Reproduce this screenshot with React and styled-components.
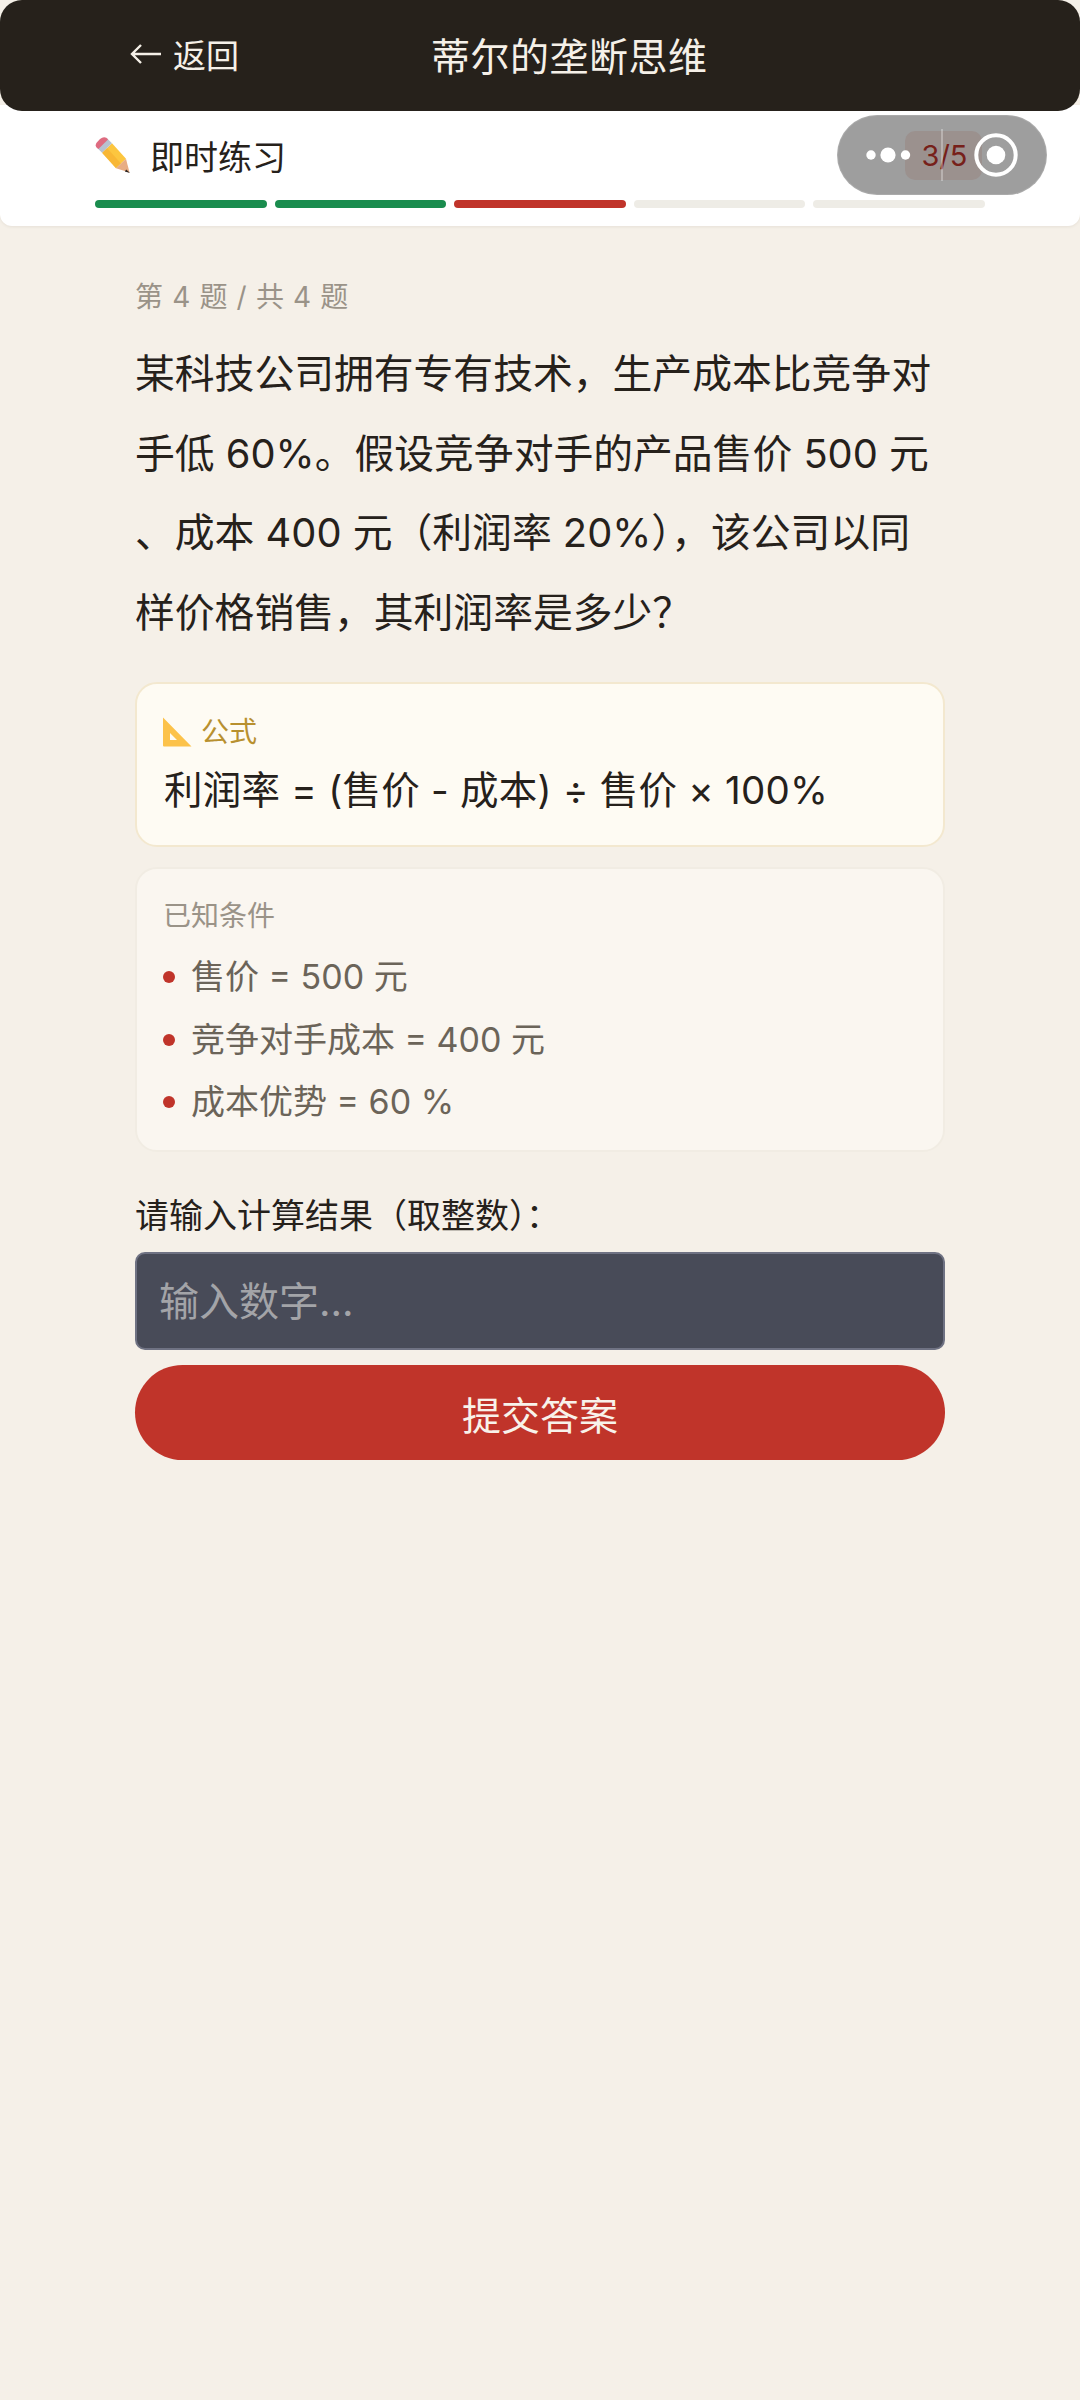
import React from "react";
import styled, { createGlobalStyle } from "styled-components";

const GlobalStyle = createGlobalStyle`
  html, body { margin: 0; padding: 0; background: #f5f0e8; }
  * { box-sizing: border-box; }
  body {
    font-family: Inter, "Noto Sans CJK SC", sans-serif;
  }
`;

const Page = styled.div`
  position: relative;
  width: 1080px;
  min-height: 2400px;
  background: #f5f0e8;
`;

const Header = styled.header`
  position: relative;
  z-index: 2;
  height: 111px;
  background: #26211b;
  border-radius: 22px;
  display: flex;
  align-items: center;
  padding: 0 0 3px 130px;
  color: #f5f0e8;
`;

const Back = styled.div`
  width: 301px;
  font-size: 33px;
  display: flex;
  align-items: center;
  gap: 11px;
`;

const Title = styled.h1`
  margin: 0;
  font-size: 39px;
  font-weight: 400;
  letter-spacing: 0.5px;
`;

const PracticeBar = styled.div`
  margin-top: -6px;
  height: 121px;
  background: #fff;
  border-radius: 0 0 12px 12px;
  box-shadow: 0 1px 3px rgba(60, 50, 30, 0.08);
  padding: 13px 95px 0;
`;

const PracticeRow = styled.div`
  height: 74px;
  display: flex;
  align-items: center;
  justify-content: space-between;
`;

const PracticeName = styled.div`
  display: flex;
  align-items: center;
  gap: 19px;
  font-size: 34px;
  color: #26211b;
`;

const CountBadge = styled.div`
  width: 77px;
  height: 49px;
  margin-right: 3px;
  padding-left: 2px;
  border-radius: 10px;
  background: #fbeae6;
  color: #c0342a;
  font-size: 29px;
  display: flex;
  align-items: center;
  justify-content: center;
`;

const Segments = styled.div`
  display: grid;
  grid-template-columns: repeat(5, 1fr);
  gap: 8px;
  margin-top: 8px;
`;

const Segment = styled.div`
  height: 8px;
  border-radius: 4px;
  background: ${(p) => p.$color};
`;

const Capsule = styled.div`
  position: absolute;
  z-index: 3;
  left: 837px;
  top: 115px;
  width: 210px;
  height: 80px;
  border-radius: 40px;
  background: rgba(0, 0, 0, 0.38);
  border: 1px solid rgba(255, 255, 255, 0.12);
`;

const CapsuleDots = styled.svg`
  position: absolute;
  left: 27px;
  top: 23px;
`;

const CapsuleLine = styled.div`
  position: absolute;
  left: 103px;
  top: 13px;
  width: 2px;
  height: 52px;
  background: rgba(255, 255, 255, 0.3);
`;

const CapsuleTarget = styled.svg`
  position: absolute;
  left: 136px;
  top: 17px;
`;

const Content = styled.main`
  padding: 50px 135px 0;
`;

const QuestionNo = styled.div`
  font-size: 28px;
  line-height: 42px;
  word-spacing: 1.3px;
  color: #9a9388;
`;

const Question = styled.p`
  margin: 16px 0 0;
  font-size: 39.8px;
  line-height: 79.5px;
  color: #26211b;
  line-break: anywhere;
`;

const FormulaCard = styled.section`
  margin-top: 30px;
  height: 165px;
  background: #fefbf3;
  border: 2px solid #f3e8cf;
  border-radius: 22px;
  padding: 28px 25px 0;
`;

const FormulaLabel = styled.div`
  display: flex;
  align-items: center;
  gap: 9px;
  font-size: 28px;
  line-height: 40px;
  color: #b8902f;
`;

const FormulaText = styled.div`
  margin-top: 9px;
  padding-left: 2px;
  font-size: 38.5px;
  line-height: 58px;
  letter-spacing: 0.25px;
  color: #26211b;
`;

const KnownCard = styled.section`
  margin-top: 20px;
  height: 285px;
  background: #faf6f0;
  border: 2px solid #f1ece3;
  border-radius: 22px;
  padding: 27px 26px 0;
`;

const KnownTitle = styled.div`
  font-size: 28px;
  line-height: 40px;
  color: #9a9388;
`;

const KnownList = styled.ul`
  list-style: none;
  margin: 16px 0 0;
  padding: 0;
  display: flex;
  flex-direction: column;
  gap: 12.5px;
`;

const KnownItem = styled.li`
  display: flex;
  align-items: center;
  gap: 16px;
  font-size: 34px;
  line-height: 50px;
  color: #6b6459;
`;

const Bullet = styled.span`
  width: 12px;
  height: 12px;
  border-radius: 50%;
  background: #c0342a;
`;

const InputLabel = styled.div`
  margin-top: 39px;
  font-size: 34px;
  line-height: 50px;
  color: #26211b;
`;

const NumberInput = styled.input`
  display: block;
  width: 100%;
  height: 98px;
  margin-top: 11px;
  padding: 0 22px;
  background: #484b58;
  border: 2px solid #6f7283;
  border-radius: 10px;
  color: #fff;
  font-family: inherit;
  font-size: 40px;
  outline: none;
  &::placeholder { color: #a3a4a8; opacity: 1; }
`;

const SubmitButton = styled.button`
  display: block;
  width: 100%;
  height: 95px;
  margin-top: 15px;
  border: none;
  border-radius: 48px;
  background: #c0342a;
  color: #f8f2ea;
  font-family: inherit;
  font-size: 39px;
`;

const segments = ["#1a8c4e", "#1a8c4e", "#c0342a", "#eeece6", "#eeece6"];

const knowns = ["售价 = 500 元", "竞争对手成本 = 400 元", "成本优势 = 60 %"];

function PencilIcon() {
  return (
    <svg width="36" height="36" viewBox="0 0 36 36">
      <path d="M17 6.2 L31 21.7 L21 31.3 L7 15.8 Z" fill="#fcc63f" />
      <path d="M12 11 L26 26.5 L21 31.3 L7 15.8 Z" fill="#f4ab2e" opacity="0.55" />
      <path d="M31 21.7 L21 31.3 L34.5 35.5 Z" fill="#e8ad84" />
      <path d="M31.2 32.4 L35 36 L29.8 34.4 Z" fill="#2b2320" />
      <path d="M12 1.2 L17 6.2 L7 15.8 L2 10.8 Z" fill="#b7c2cf" />
      <path d="M1.6 10.4 Q-0.2 8.2 1.6 5.8 L5 2 Q8.4 -1 11.4 0.8 L13 2.4 L3.4 12 Z" fill="#de6b80" />
    </svg>
  );
}

function RulerIcon() {
  return (
    <svg width="30" height="30" viewBox="0 0 30 30">
      <path
        fillRule="evenodd"
        d="M1 0.5 L29.5 29.5 L2 29.5 Q1 29.5 1 28.5 Z M8 16 L8 23 L15 23 Z"
        fill="#fcc24a"
      />
    </svg>
  );
}

export default function App() {
  return (
    <Page>
      <GlobalStyle />
      <Header>
        <Back>
          <svg width="32" height="24" viewBox="0 0 32 24" fill="none" stroke="#f5f0e8" strokeWidth="2.4">
            <path d="M31 12 H2 M11 3 L2 12 L11 21" />
          </svg>
          返回
        </Back>
        <Title>蒂尔的垄断思维</Title>
      </Header>
      <PracticeBar>
        <PracticeRow>
          <PracticeName>
            <PencilIcon />
            即时练习
          </PracticeName>
          <CountBadge>3/5</CountBadge>
        </PracticeRow>
        <Segments>
          {segments.map((c, i) => (
            <Segment key={i} $color={c} />
          ))}
        </Segments>
      </PracticeBar>
      <Capsule>
        <CapsuleDots width="48" height="32" viewBox="0 0 48 32" fill="#fff">
          <circle cx="6" cy="16" r="4.7" />
          <circle cx="23" cy="16" r="7.6" />
          <circle cx="40.5" cy="16" r="4.7" />
        </CapsuleDots>
        <CapsuleLine />
        <CapsuleTarget width="44" height="44" viewBox="0 0 44 44">
          <circle cx="22" cy="22" r="19.7" fill="none" stroke="#fff" strokeWidth="4" />
          <circle cx="22" cy="22" r="9.3" fill="#fff" />
        </CapsuleTarget>
      </Capsule>
      <Content>
        <QuestionNo>第 4 题 / 共 4 题</QuestionNo>
        <Question>
          某科技公司拥有专有技术，生产成本比竞争对手低 60%。假设竞争对手的产品售价 500 元、成本 400 元（利润率 20%），该公司以同样价格销售，其利润率是多少？
        </Question>
        <FormulaCard>
          <FormulaLabel>
            <RulerIcon />
            公式
          </FormulaLabel>
          <FormulaText>利润率 = (售价 - 成本) ÷ 售价 × 100%</FormulaText>
        </FormulaCard>
        <KnownCard>
          <KnownTitle>已知条件</KnownTitle>
          <KnownList>
            {knowns.map((k) => (
              <KnownItem key={k}>
                <Bullet />
                {k}
              </KnownItem>
            ))}
          </KnownList>
        </KnownCard>
        <InputLabel>请输入计算结果（取整数）：</InputLabel>
        <NumberInput placeholder="输入数字..." />
        <SubmitButton>提交答案</SubmitButton>
      </Content>
    </Page>
  );
}
